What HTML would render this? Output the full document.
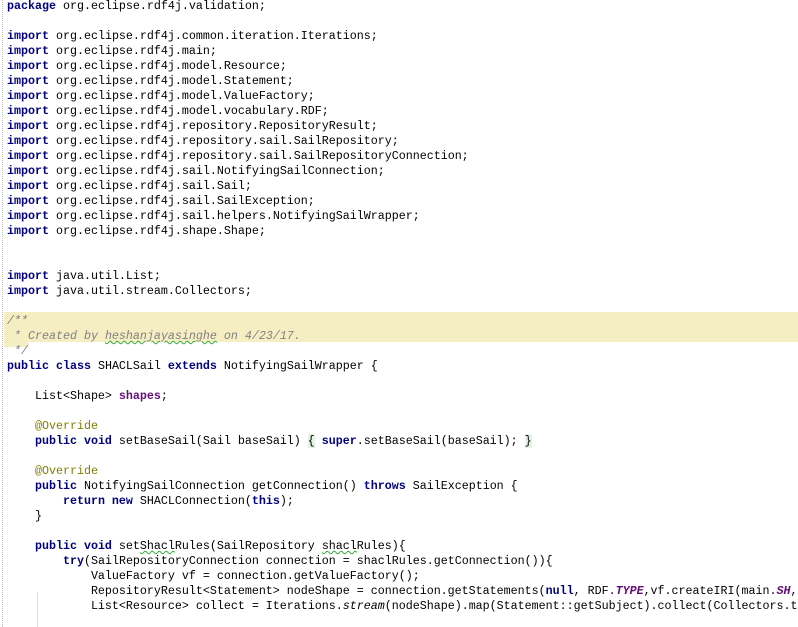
<!DOCTYPE html>
<html><head><meta charset="utf-8"><style>
html,body{margin:0;padding:0;background:#fff;width:798px;height:627px;overflow:hidden;position:relative}
.g{position:absolute;left:2px;top:0;height:627px;border-left:1px dotted #bbb}
.hl{position:absolute;left:4px;top:312px;width:794px;height:30px;background:#f5eec3}
.hl2{position:absolute;left:4px;top:342px;width:24px;height:5px;background:#f5eec3}
.ig{position:absolute;left:37px;top:592px;height:35px;border-left:1px solid #ddd}
pre{position:absolute;left:7px;top:-1px;width:791px;overflow:hidden;margin:0;font-family:"Liberation Mono",monospace;font-size:11.67px;line-height:15px;color:#000;white-space:pre}
.k{color:#000080;font-weight:bold}
.f{color:#660e7a;font-weight:bold}
.fi{color:#660e7a;font-weight:bold;font-style:italic}
.a{color:#808000}
.c{color:#808080;font-style:italic}
.i{font-style:italic}
.w{text-decoration:underline wavy #3a3;text-decoration-thickness:1px}
.b{background:#e4f4e4}
</style></head><body>
<div class="g"></div><div class="hl"></div><div class="hl2"></div><div class="ig"></div>
<pre><span class="k">package</span> org.eclipse.rdf4j.validation;

<span class="k">import</span> org.eclipse.rdf4j.common.iteration.Iterations;
<span class="k">import</span> org.eclipse.rdf4j.main;
<span class="k">import</span> org.eclipse.rdf4j.model.Resource;
<span class="k">import</span> org.eclipse.rdf4j.model.Statement;
<span class="k">import</span> org.eclipse.rdf4j.model.ValueFactory;
<span class="k">import</span> org.eclipse.rdf4j.model.vocabulary.RDF;
<span class="k">import</span> org.eclipse.rdf4j.repository.RepositoryResult;
<span class="k">import</span> org.eclipse.rdf4j.repository.sail.SailRepository;
<span class="k">import</span> org.eclipse.rdf4j.repository.sail.SailRepositoryConnection;
<span class="k">import</span> org.eclipse.rdf4j.sail.NotifyingSailConnection;
<span class="k">import</span> org.eclipse.rdf4j.sail.Sail;
<span class="k">import</span> org.eclipse.rdf4j.sail.SailException;
<span class="k">import</span> org.eclipse.rdf4j.sail.helpers.NotifyingSailWrapper;
<span class="k">import</span> org.eclipse.rdf4j.shape.Shape;


<span class="k">import</span> java.util.List;
<span class="k">import</span> java.util.stream.Collectors;

<span class="c">/**</span>
<span class="c"> * Created by <span class="w">heshanjayasinghe</span> on 4/23/17.</span>
<span class="c"> */</span>
<span class="k">public class</span> SHACLSail <span class="k">extends</span> NotifyingSailWrapper {

    List&lt;Shape&gt; <span class="f">shapes</span>;

    <span class="a">@Override</span>
    <span class="k">public void</span> setBaseSail(Sail baseSail) <span class="b">{</span> <span class="k">super</span>.setBaseSail(baseSail); <span class="b">}</span>

    <span class="a">@Override</span>
    <span class="k">public</span> NotifyingSailConnection getConnection() <span class="k">throws</span> SailException {
        <span class="k">return new</span> SHACLConnection(<span class="k">this</span>);
    }

    <span class="k">public void</span> set<span class="w">Shacl</span>Rules(SailRepository <span class="w">shacl</span>Rules){
        <span class="k">try</span>(SailRepositoryConnection connection = shaclRules.getConnection()){
            ValueFactory vf = connection.getValueFactory();
            RepositoryResult&lt;Statement&gt; nodeShape = connection.getStatements(<span class="k">null</span>, RDF.<span class="fi">TYPE</span>,vf.createIRI(main.<span class="fi">SH</span>,
            List&lt;Resource&gt; collect = Iterations.<span class="i">stream</span>(nodeShape).map(Statement::getSubject).collect(Collectors.t
</pre>
</body></html>
